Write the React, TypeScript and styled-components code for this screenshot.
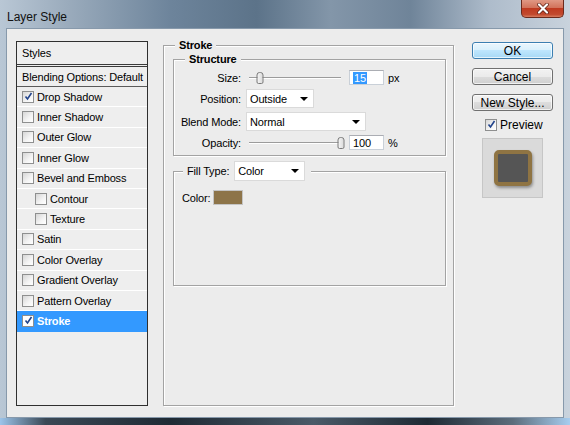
import styled, { createGlobalStyle } from "styled-components";

const GlobalStyle = createGlobalStyle`
  html, body {
    margin: 0;
    padding: 0;
  }
  body {
    width: 570px;
    height: 425px;
    overflow: hidden;
    font-family: "Liberation Sans", Arial, sans-serif;
    font-size: 11px;
    letter-spacing: -0.15px;
    color: #000;
  }
`;

const Window = styled.div`
  width: 570px;
  height: 425px;
  box-sizing: border-box;
  display: flex;
  flex-direction: column;
  padding: 0 6px 7px 6px;
  background:
    linear-gradient(90deg, #9cc4ea 0%, #3a4855 8%, #1f2a34 30%, #4a5a68 55%, #1e2933 75%, #5c6d7c 90%, #a7cdef 100%) bottom / 100% 7px no-repeat,
    linear-gradient(90deg, #b9c7d5 0%, #9aabbc 12%, #6d849b 30%, #5c7389 45%, #8396a9 58%, #6f8499 72%, #aebccb 86%, #c9d3dd 100%);
`;

const TitleBar = styled.div`
  height: 28px;
  display: flex;
  align-items: flex-start;
  justify-content: space-between;
`;

const Title = styled.span`
  margin: 10px 0 0 1px;
  font-size: 12px;
  letter-spacing: 0;
  color: #111;
`;

const CloseButton = styled.div`
  width: 43px;
  height: 18px;
  box-sizing: border-box;
  border: 1px solid #6b2a1c;
  border-top: none;
  border-radius: 0 0 5px 5px;
  background: linear-gradient(#e09884 0%, #d2735b 45%, #bf3a20 50%, #c24a2e 85%, #d77c5f 100%);
  display: flex;
  align-items: center;
  justify-content: center;
`;

const Client = styled.div`
  flex: 1;
  display: flex;
  align-items: flex-start;
  padding: 12px 10px 0 9px;
  background: #ececec;
  border: 1px solid #8799ab;
`;

const StyleList = styled.div`
  width: 132px;
  height: 365px;
  box-sizing: border-box;
  border: 1px solid #2f2f2f;
  background: #eeeeee;
  flex-shrink: 0;
`;

const ListHeader = styled.div`
  height: 25px;
  box-sizing: border-box;
  border-bottom: 3px double #3a3a3a;
  padding-left: 5px;
  display: flex;
  align-items: center;
`;

const BlendRow = styled.div`
  height: 20px;
  box-sizing: border-box;
  border-bottom: 1px solid #5a5a5a;
  padding-left: 5px;
  display: flex;
  align-items: center;
  white-space: nowrap;
`;

const ListRow = styled.div<{ $indent?: boolean; $active?: boolean }>`
  height: 20.4px;
  box-sizing: border-box;
  border-bottom: 1px solid ${({ $active }) => ($active ? "#3399ff" : "#ffffff")};
  padding-left: ${({ $indent }) => ($indent ? "18px" : "5px")};
  display: flex;
  align-items: center;
  gap: 3px;
  background: ${({ $active }) => ($active ? "#3399ff" : "transparent")};
  color: ${({ $active }) => ($active ? "#fff" : "#000")};
  font-weight: ${({ $active }) => ($active ? "bold" : "normal")};
`;

const Box = styled.span<{ $white?: boolean }>`
  width: 12px;
  height: 12px;
  box-sizing: border-box;
  border: 1px solid #8e8f8f;
  background: ${({ $white }) =>
    $white ? "#ffffff" : "linear-gradient(135deg, #d6d6d6 0%, #f4f4f4 60%, #ffffff 100%)"};
  display: inline-flex;
  align-items: center;
  justify-content: center;
  flex-shrink: 0;
`;

const Group = styled.fieldset`
  margin: 0;
  min-width: 0;
  box-sizing: border-box;
  border: 1px solid #a3a3a3;
  box-shadow: inset 1px 1px 0 #fff, 1px 1px 0 #fff;
`;

const StrokeGroup = styled(Group)`
  width: 291px;
  height: 367px;
  margin: -2px 0 0 15px;
  padding: 1px 7px 0 9px;
  flex-shrink: 0;
`;

const Legend = styled.legend<{ $offset: number }>`
  margin-left: ${({ $offset }) => $offset}px;
  padding: 0 4px;
  font-weight: bold;
  line-height: 13px;
  background: #ececec;
`;

const StructureGroup = styled(Group)`
  padding: 4px 0 5px 0;
`;

const FillGroup = styled(Group)`
  margin-top: 5px;
  padding: 9px 0 80px 8px;
`;

const FillLegend = styled.legend`
  margin-left: 1px;
  padding: 0 6px 0 4px;
  display: flex;
  align-items: center;
  gap: 5px;
  background: #ececec;
`;

const FieldGrid = styled.div`
  display: grid;
  grid-template-columns: 67px 1fr;
  column-gap: 5px;
  row-gap: 4px;
  align-items: center;
`;

const Label = styled.span`
  text-align: right;
`;

const Controls = styled.div`
  display: flex;
  align-items: center;
`;

const Slider = styled.div`
  position: relative;
  width: 92px;
  height: 14px;
  margin: 0 8px 0 3px;
  &::before {
    content: "";
    position: absolute;
    left: 0;
    right: 0;
    top: 6px;
    height: 1px;
    background: #9c9c9c;
    box-shadow: 0 1px 0 #fff;
  }
`;

const Thumb = styled.span`
  position: absolute;
  top: 1px;
  width: 7px;
  height: 12px;
  box-sizing: border-box;
  border: 1px solid #7a7a7a;
  border-radius: 3px 3px 2px 2px;
  background: linear-gradient(90deg, #f4f4f4, #dcdcdc);
  transform: translateX(-50%);
`;

const NumberInput = styled.div`
  width: 35px;
  height: 15px;
  box-sizing: border-box;
  border: 1px solid #c9d0d8;
  border-top-color: #abadb3;
  background: #fff;
  padding-left: 3px;
  display: flex;
  align-items: center;
`;

const Selected = styled.span`
  background: #3399ff;
  color: #fff;
  padding: 0 1px;
`;

const Unit = styled.span`
  margin-left: 4px;
`;

const Select = styled.div<{ $width: number; $height?: number }>`
  width: ${({ $width }) => $width}px;
  height: ${({ $height }) => $height ?? 19}px;
  box-sizing: border-box;
  border: 1px solid #dadada;
  background: #fff;
  padding: 0 5px 0 3px;
  display: flex;
  align-items: center;
  justify-content: space-between;
  font-weight: normal;
`;

const Arrow = styled.span`
  width: 0;
  height: 0;
  border-left: 4px solid transparent;
  border-right: 4px solid transparent;
  border-top: 4px solid #000;
`;

const ColorRow = styled.div`
  display: flex;
  align-items: center;
  gap: 3px;
`;

const Swatch = styled.div`
  width: 30px;
  height: 15px;
  box-sizing: border-box;
  border: 1px solid #c4c4c4;
  background: #8d7449;
`;

const SideColumn = styled.div`
  width: 81px;
  margin: 1px 0 0 18px;
  display: flex;
  flex-direction: column;
  flex-shrink: 0;
`;

const Button = styled.div<{ $primary?: boolean }>`
  height: 17px;
  box-sizing: border-box;
  margin-bottom: 9px;
  border: 1px solid ${({ $primary }) => ($primary ? "#3c7fb1" : "#707070")};
  border-radius: 3px;
  background: ${({ $primary }) =>
    $primary
      ? "linear-gradient(#eaf6fd 0%, #d9f0fc 50%, #bee6fd 50%, #a7d9f5 100%)"
      : "linear-gradient(#f2f2f2 0%, #ebebeb 50%, #dddddd 50%, #cfcfcf 100%)"};
  box-shadow: inset 0 0 0 1px rgba(255, 255, 255, 0.7);
  font-size: 12px;
  letter-spacing: 0;
  display: flex;
  align-items: center;
  justify-content: center;
`;

const PreviewToggle = styled.div`
  margin: -2px 0 0 13px;
  display: flex;
  align-items: center;
  gap: 3px;
  font-size: 12px;
  letter-spacing: 0;
  height: 13px;
`;

const PreviewBox = styled.div`
  width: 61px;
  height: 60px;
  margin-top: 7px;
  align-self: center;
  box-sizing: border-box;
  border: 1px solid #c6c6c6;
  background: #dadada;
  display: flex;
  align-items: center;
  justify-content: center;
`;

const PreviewSquare = styled.div`
  width: 38px;
  height: 36px;
  box-sizing: border-box;
  border: 4px solid #8f7443;
  border-radius: 5px;
  background: #555555;
  box-shadow: 1px 2px 3px rgba(0, 0, 0, 0.35);
`;

const Check = () => (
  <svg width="9" height="9" viewBox="0 0 9 9">
    <path d="M1.5 4.5 L3.5 7 L7.5 1" fill="none" stroke="#22448c" strokeWidth="1.6" />
  </svg>
);

interface IItem {
  name: string;
  checked?: boolean;
  indent?: boolean;
  active?: boolean;
}

const items: IItem[] = [
  { name: "Drop Shadow", checked: true },
  { name: "Inner Shadow" },
  { name: "Outer Glow" },
  { name: "Inner Glow" },
  { name: "Bevel and Emboss" },
  { name: "Contour", indent: true },
  { name: "Texture", indent: true },
  { name: "Satin" },
  { name: "Color Overlay" },
  { name: "Gradient Overlay" },
  { name: "Pattern Overlay" },
  { name: "Stroke", checked: true, active: true },
];

const thumbLeft = (pct: number) => 6 + pct * 86;

const App = () => {
  return (
    <>
      <GlobalStyle />
      <Window>
        <TitleBar>
          <Title>Layer Style</Title>
          <CloseButton>
            <svg width="12" height="11" viewBox="0 0 12 11">
              <path d="M2 1.5 L10 9.5 M10 1.5 L2 9.5" stroke="#5a1d12" strokeWidth="3.6" strokeLinecap="round" />
              <path d="M2 1.5 L10 9.5 M10 1.5 L2 9.5" stroke="#fff" strokeWidth="2.2" strokeLinecap="round" />
            </svg>
          </CloseButton>
        </TitleBar>
        <Client>
          <StyleList>
            <ListHeader>Styles</ListHeader>
            <BlendRow>Blending Options: Default</BlendRow>
            {items.map((item) => (
              <ListRow key={item.name} $indent={item.indent} $active={item.active}>
                <Box $white={item.active}>{item.checked && <Check />}</Box>
                {item.name}
              </ListRow>
            ))}
          </StyleList>

          <StrokeGroup>
            <Legend $offset={2}>Stroke</Legend>
            <StructureGroup>
              <Legend $offset={11}>Structure</Legend>
              <FieldGrid>
                <Label>Size:</Label>
                <Controls>
                  <Slider>
                    <Thumb style={{ left: thumbLeft(15 / 250) }} />
                  </Slider>
                  <NumberInput>
                    <Selected>15</Selected>
                  </NumberInput>
                  <Unit>px</Unit>
                </Controls>

                <Label>Position:</Label>
                <Controls>
                  <Select $width={68}>
                    Outside
                    <Arrow />
                  </Select>
                </Controls>

                <Label>Blend Mode:</Label>
                <Controls>
                  <Select $width={120}>
                    Normal
                    <Arrow />
                  </Select>
                </Controls>

                <Label>Opacity:</Label>
                <Controls>
                  <Slider>
                    <Thumb style={{ left: thumbLeft(1) }} />
                  </Slider>
                  <NumberInput>100</NumberInput>
                  <Unit>%</Unit>
                </Controls>
              </FieldGrid>
            </StructureGroup>

            <FillGroup>
              <FillLegend>
                Fill Type:
                <Select $width={71} $height={20}>
                  Color
                  <Arrow />
                </Select>
              </FillLegend>
              <ColorRow>
                Color:
                <Swatch />
              </ColorRow>
            </FillGroup>
          </StrokeGroup>

          <SideColumn>
            <Button $primary>OK</Button>
            <Button>Cancel</Button>
            <Button>New Style...</Button>
            <PreviewToggle>
              <Box>
                <Check />
              </Box>
              Preview
            </PreviewToggle>
            <PreviewBox>
              <PreviewSquare />
            </PreviewBox>
          </SideColumn>
        </Client>
      </Window>
    </>
  );
};

export default App;
